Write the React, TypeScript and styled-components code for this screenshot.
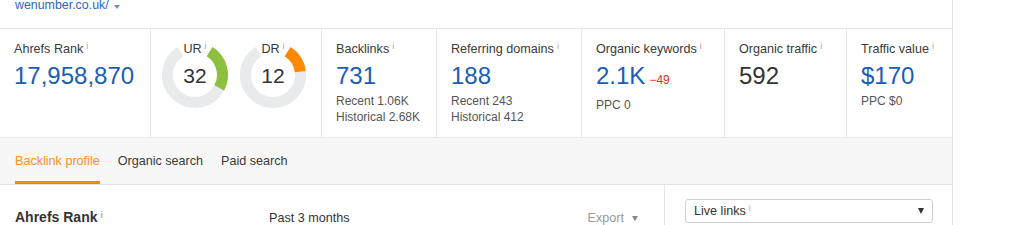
import styled, { createGlobalStyle } from "styled-components";

const GlobalStyle = createGlobalStyle`
  body {
    margin: 0;
    background: #fff;
    font-family: "Liberation Sans", Arial, sans-serif;
    color: #333;
  }
`;

const Page = styled.div`
  width: 953px;
  box-sizing: border-box;
  border-right: 1px solid #e6e6e6;
`;

const UrlBar = styled.div`
  height: 28px;
  padding-left: 15px;
  display: flex;
  align-items: flex-start;
  overflow: hidden;
`;

const Url = styled.a`
  margin-top: -2px;
  font-size: 12.4px;
  line-height: 15px;
  color: #2d67b8;
  text-decoration: none;
  display: flex;
  align-items: center;
`;

const UrlCaret = styled.span`
  width: 0;
  height: 0;
  margin: 2px 0 0 5px;
  border-left: 3px solid transparent;
  border-right: 3px solid transparent;
  border-top: 4px solid #6d8ec7;
`;

const StatsRow = styled.div`
  display: flex;
  height: 110px;
  box-sizing: border-box;
  border-top: 1px solid #e6e6e6;
  border-bottom: 1px solid #e6e6e6;
`;

const StatCell = styled.div<{ $width?: number }>`
  box-sizing: border-box;
  ${(p) => (p.$width ? `width: ${p.$width}px;` : "flex: 1;")}
  border-right: ${(p) => (p.$width ? "1px solid #e6e6e6" : "none")};
  padding: 13px 0 0 14px;
`;

const Label = styled.div`
  font-size: 12.6px;
  line-height: 15px;
  color: #3a3a3a;
  white-space: nowrap;
`;

const Info = styled.span`
  font-size: 9px;
  color: #a8a8a8;
  margin-left: 3px;
  vertical-align: 4px;
  line-height: 0;
`;

const Value = styled.div<{ $plain?: boolean }>`
  margin-top: 5px;
  font-size: 24px;
  line-height: 28px;
  color: ${(p) => (p.$plain ? "#333" : "#1a5db5")};
  white-space: nowrap;
`;

const Delta = styled.span`
  font-size: 12px;
  color: #e8262a;
  margin-left: 4px;
`;

const SubLines = styled.div`
  margin-top: 3px;
`;

const SubLine = styled.div`
  font-size: 12px;
  line-height: 16px;
  color: #555;
  white-space: nowrap;
`;

const GaugeCell = styled.div`
  width: 171px;
  box-sizing: border-box;
  border-right: 1px solid #e6e6e6;
  padding: 13px 0 0 11px;
  display: flex;
  gap: 12px;
`;

const GaugeBox = styled.div`
  position: relative;
  width: 66px;
  height: 66px;
`;

const GaugeLabel = styled.div`
  position: absolute;
  top: 0;
  left: 0;
  right: 0;
  text-align: center;
  font-size: 12.6px;
  line-height: 15px;
  color: #3a3a3a;
`;

const GaugeNumber = styled.div`
  position: absolute;
  inset: 1px 0 0 0;
  display: flex;
  align-items: center;
  justify-content: center;
  font-size: 21px;
  color: #333;
`;

const TabBar = styled.div`
  height: 47px;
  box-sizing: border-box;
  background: #f7f7f7;
  border-bottom: 1px solid #e3e3e3;
  padding-left: 15px;
  display: flex;
  gap: 18px;
`;

const Tab = styled.div<{ $active?: boolean }>`
  height: 46px;
  box-sizing: border-box;
  display: flex;
  align-items: center;
  font-size: 12.6px;
  color: ${(p) => (p.$active ? "#f99025" : "#3a3a3a")};
  border-bottom: 3px solid ${(p) => (p.$active ? "#ff8800" : "transparent")};
  padding-top: 3px;
`;

const Lower = styled.div`
  display: flex;
`;

const ChartHead = styled.div`
  width: 665px;
  box-sizing: border-box;
  border-right: 1px solid #e6e6e6;
  padding: 24px 26px 0 15px;
  display: flex;
  align-items: baseline;
  height: 60px;
`;

const ChartTitle = styled.div`
  width: 254px;
  font-size: 14px;
  font-weight: bold;
  line-height: 17px;
  color: #333;
`;

const Period = styled.div`
  flex: 1;
  font-size: 12.6px;
  color: #333;
`;

const Export = styled.div`
  font-size: 12.6px;
  color: #999;
  display: flex;
  align-items: center;
  gap: 8px;
`;

const SmallCaret = styled.span<{ $color: string; $size: number }>`
  width: 0;
  height: 0;
  border-left: ${(p) => p.$size * 0.6}px solid transparent;
  border-right: ${(p) => p.$size * 0.6}px solid transparent;
  border-top: ${(p) => p.$size}px solid ${(p) => p.$color};
`;

const Side = styled.div`
  flex: 1;
  padding: 14px 19px 0 20px;
`;

const Select = styled.div`
  height: 24px;
  box-sizing: border-box;
  border: 1px solid #cfcfcf;
  border-radius: 3px;
  padding: 0 8px;
  display: flex;
  align-items: center;
  justify-content: space-between;
  font-size: 12.6px;
  color: #333;
`;

const polar = (deg: number, r: number) => {
  const a = (deg * Math.PI) / 180;
  return [33 + r * Math.sin(a), 33 - r * Math.cos(a)];
};

const arc = (from: number, to: number, r: number) => {
  const [x1, y1] = polar(from, r);
  const [x2, y2] = polar(to, r);
  const large = to - from > 180 ? 1 : 0;
  return `M${x1} ${y1} A${r} ${r} 0 ${large} 1 ${x2} ${y2}`;
};

function Gauge({ label, value, color }: { label: string; value: number; color: string }) {
  const start = 32;
  const sweep = 30 + value * 1.75;
  return (
    <GaugeBox>
      <svg width="66" height="66" viewBox="0 0 66 66">
        <path d={arc(start, 360 - start, 27.5)} stroke="#e9eaeb" strokeWidth="11" fill="none" />
        <path d={arc(start, start + sweep, 27.5)} stroke={color} strokeWidth="11" fill="none" />
      </svg>
      <GaugeLabel>
        {label}
        <Info>i</Info>
      </GaugeLabel>
      <GaugeNumber>{value}</GaugeNumber>
    </GaugeBox>
  );
}

type Stat = {
  label: string;
  value: string;
  width?: number;
  delta?: string;
  plain?: boolean;
  sub?: string[];
};

const stats: Stat[] = [
  { label: "Backlinks", value: "731", width: 115, sub: ["Recent 1.06K", "Historical 2.68K"] },
  { label: "Referring domains", value: "188", width: 145, sub: ["Recent 243", "Historical 412"] },
  { label: "Organic keywords", value: "2.1K", width: 143, delta: "\u221249", sub: ["PPC 0"] },
  { label: "Organic traffic", value: "592", width: 122, plain: true },
  { label: "Traffic value", value: "$170", sub: ["PPC $0"] },
];

function StatBlock({ stat }: { stat: Stat }) {
  return (
    <StatCell $width={stat.width}>
      <Label>
        {stat.label}
        <Info>i</Info>
      </Label>
      <Value $plain={stat.plain}>
        {stat.value}
        {stat.delta && <Delta>{stat.delta}</Delta>}
      </Value>
      {stat.sub && (
        <SubLines>
          {stat.sub.map((s) => (
            <SubLine key={s}>{s}</SubLine>
          ))}
        </SubLines>
      )}
    </StatCell>
  );
}

export default function App() {
  return (
    <>
      <GlobalStyle />
      <Page>
        <UrlBar>
          <Url href="#">
            wenumber.co.uk/
            <UrlCaret />
          </Url>
        </UrlBar>
        <StatsRow>
          <StatCell $width={151}>
            <Label>
              Ahrefs Rank
              <Info>i</Info>
            </Label>
            <Value>17,958,870</Value>
          </StatCell>
          <GaugeCell>
            <Gauge label="UR" value={32} color="#8ec03f" />
            <Gauge label="DR" value={12} color="#ff8a00" />
          </GaugeCell>
          {stats.map((s) => (
            <StatBlock key={s.label} stat={s} />
          ))}
        </StatsRow>
        <TabBar>
          <Tab $active>Backlink profile</Tab>
          <Tab>Organic search</Tab>
          <Tab>Paid search</Tab>
        </TabBar>
        <Lower>
          <ChartHead>
            <ChartTitle>
              Ahrefs Rank
              <Info>i</Info>
            </ChartTitle>
            <Period>Past 3 months</Period>
            <Export>
              Export
              <SmallCaret $color="#888" $size={5} />
            </Export>
          </ChartHead>
          <Side>
            <Select>
              <span>
                Live links
                <Info>i</Info>
              </span>
              <SmallCaret $color="#333" $size={6} />
            </Select>
          </Side>
        </Lower>
      </Page>
    </>
  );
}
